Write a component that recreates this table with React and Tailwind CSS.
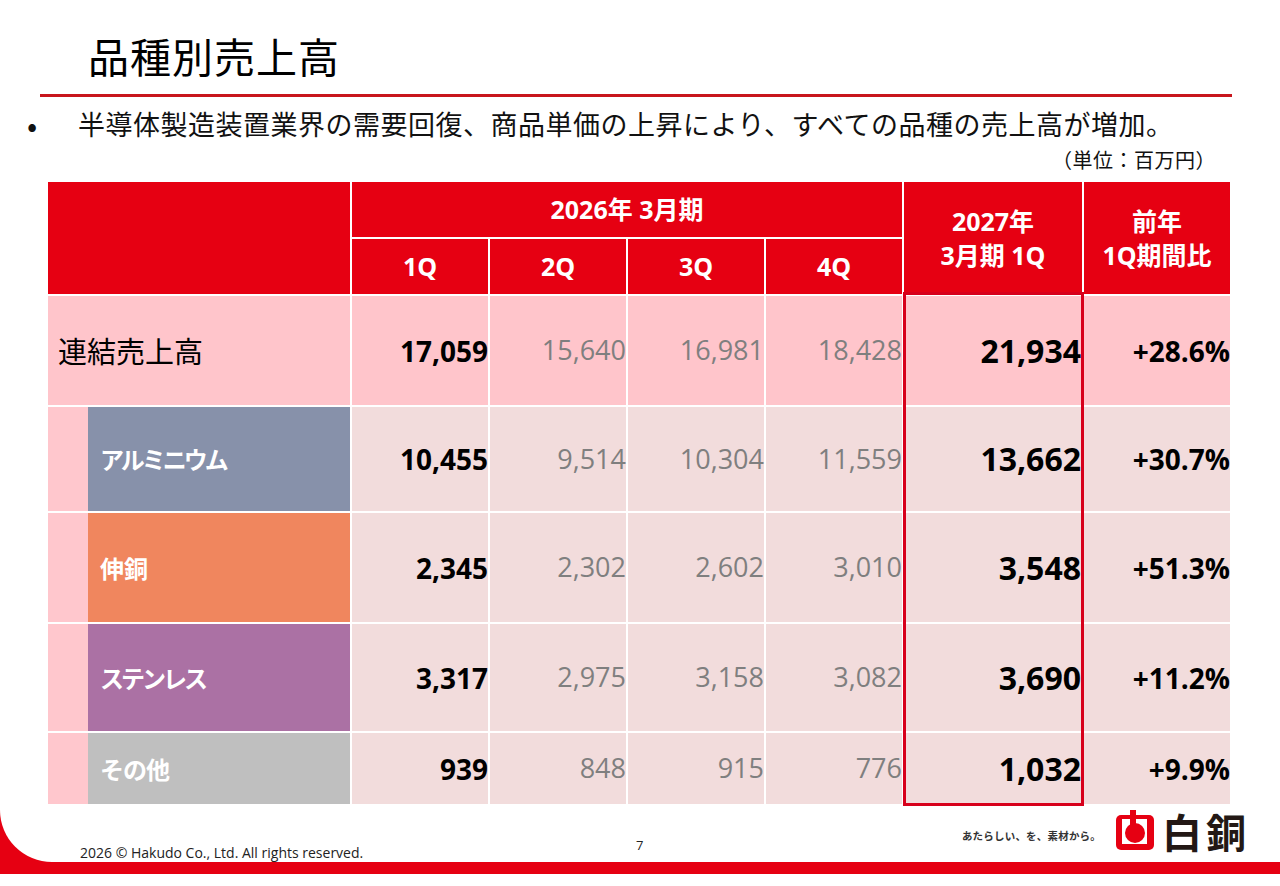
import React from 'react';

const JP = "font-['Noto_Sans_CJK_JP',sans-serif]";
const NUM = "font-['Open_Sans','Noto_Sans_CJK_JP',sans-serif]";

const rows = [
    { label: 'アルミニウム', color: 'bg-[#8791aa]', track: 'tracking-[-3px]', q: ['10,455', '9,514', '10,304', '11,559'], cur: '13,662', pct: '+30.7%' },
    { label: '伸銅', color: 'bg-[#f0865e]', track: 'tracking-[0px]', q: ['2,345', '2,302', '2,602', '3,010'], cur: '3,548', pct: '+51.3%' },
    { label: 'ステンレス', color: 'bg-[#ab71a4]', track: 'tracking-[-3px]', q: ['3,317', '2,975', '3,158', '3,082'], cur: '3,690', pct: '+11.2%' },
    { label: 'その他', color: 'bg-[#bfbfbf]', track: 'tracking-[-1px]', q: ['939', '848', '915', '776'], cur: '1,032', pct: '+9.9%' },
];

const Logo = () => (
    <svg width="38" height="40" viewBox="0 0 38 40">
        <rect x="0" y="5" width="38" height="35" rx="5" fill="#e60012" />
        <rect x="6" y="9" width="25" height="25" fill="#fff" />
        <circle cx="19" cy="23" r="10" fill="#e60012" />
        <rect x="14" y="0" width="6" height="16" fill="#e60012" />
    </svg>
);

const NumCells = ({ q, cur, pct, bg }) => (
    <>
        <div className={`${bg} flex items-center justify-end ${NUM} text-[28px] font-bold text-black`}>{q[0]}</div>
        {q.slice(1).map((v, i) => (
            <div key={i} className={`${bg} flex items-center justify-end ${NUM} text-[27px] text-[#7f7f7f]`}>{v}</div>
        ))}
        <div className={`${bg} flex items-center justify-end pr-[1px] ${NUM} text-[32px] font-bold text-black`}>{cur}</div>
        <div className={`${bg} flex items-center justify-end ${NUM} text-[28px] font-bold text-black`}>{pct}</div>
    </>
);

export default function App() {
    return (
        <div className="w-[1280px] h-[886px] bg-white flex flex-col overflow-hidden">
            <div className="flex-1 bg-[#e60012] pb-[12px] flex flex-col">
                <div className="flex-1 bg-white rounded-bl-[52px] flex flex-col">
                    {/* Title */}
                    <div className={`pt-[35px] pl-[88px] ${JP} text-[41px] leading-[40px] tracking-[1px] text-black`}>品種別売上高</div>
                    <div className="mt-[19px] ml-[40px] w-[1192px] h-[3px] bg-[#c8161d]" />

                    {/* Bullet */}
                    <div className={`mt-[9px] flex items-center ${JP} text-[27px] leading-[36px] text-[#111]`}>
                        <span className="w-[78px] pl-[27px] text-[30px] leading-[36px]">•</span>
                        <span className="tracking-[0.5px]">半導体製造装置業界の需要回復、商品単価の上昇により、すべての品種の売上高が増加。</span>
                    </div>
                    <div className={`mt-[6px] pr-[64px] text-right ${JP} text-[20px] leading-[24px] tracking-[0.5px] text-[#111]`}>（単位：百万円）</div>

                    {/* Table */}
                    <div className="relative mt-[10px] ml-[48px] w-[1182px]">
                        <div className="grid grid-cols-[302px_136px_136px_136px_136px_178px_146px] grid-rows-[55px_55px_109px_104px_109px_107px_71px] gap-[2px]">
                            <div className="row-span-2 bg-[#e60012]" />
                            <div className={`col-span-4 bg-[#e60012] flex items-center justify-center ${NUM} text-[25px] font-bold text-white`}>2026年 3月期</div>
                            <div className={`row-span-2 bg-[#e60012] flex flex-col items-center justify-center ${NUM} text-[25px] leading-[34px] font-bold text-white`}>
                                <span>2027年</span>
                                <span>3月期 1Q</span>
                            </div>
                            <div className={`row-span-2 bg-[#e60012] flex flex-col items-center justify-center ${NUM} text-[25px] leading-[34px] font-bold text-white`}>
                                <span>前年</span>
                                <span>1Q期間比</span>
                            </div>
                            {['1Q', '2Q', '3Q', '4Q'].map((h) => (
                                <div key={h} className={`bg-[#e60012] flex items-center justify-center ${NUM} text-[25px] font-bold text-white`}>{h}</div>
                            ))}

                            {/* Consolidated */}
                            <div className={`bg-[#ffc5cb] flex items-center pl-[10px] ${JP} text-[29px] text-black`}>連結売上高</div>
                            <NumCells q={['17,059', '15,640', '16,981', '18,428']} cur="21,934" pct="+28.6%" bg="bg-[#ffc5cb]" />

                            {rows.map((r) => (
                                <React.Fragment key={r.label}>
                                    <div className="flex">
                                        <div className="w-[40px] bg-[#ffc7cd]" />
                                        <div className={`flex-1 ${r.color} flex items-center pl-[12px] ${JP} ${r.track} whitespace-nowrap text-[24px] font-bold text-white`}>{r.label}</div>
                                    </div>
                                    <NumCells q={r.q} cur={r.cur} pct={r.pct} bg="bg-[#f2dcdc]" />
                                </React.Fragment>
                            ))}
                        </div>

                        {/* Highlight frame over the current-quarter column */}
                        <div className="absolute left-[855px] top-[110px] w-[181px] h-[514px] border-[3px] border-[#d7001b] pointer-events-none" />
                    </div>

                    {/* Footer */}
                    <div className="mt-auto h-[56px] flex">
                        <div className={`w-[636px] pl-[80px] self-end pb-[1px] ${NUM} text-[14px] leading-[16px] text-[#222]`}>2026 © Hakudo Co., Ltd. All rights reserved.</div>
                        <div className={`w-[10px] pt-[31px] ${NUM} text-[13px] leading-[16px] text-[#222]`}>7</div>
                        <div className="flex-1 flex items-start justify-end pr-[30px] pt-[4px]">
                            <span className={`mt-[19px] mr-[15px] ${JP} text-[10.5px] leading-[14px] font-bold tracking-[0.2px] text-[#333]`}>あたらしい、を、素材から。</span>
                            <Logo />
                            <span className={`ml-[8px] mt-[1px] ${JP} text-[40px] leading-[40px] font-bold tracking-[4px] text-[#231815]`}>白銅</span>
                        </div>
                    </div>
                </div>
            </div>
            <div className="h-[12px] bg-white" />
        </div>
    );
}
